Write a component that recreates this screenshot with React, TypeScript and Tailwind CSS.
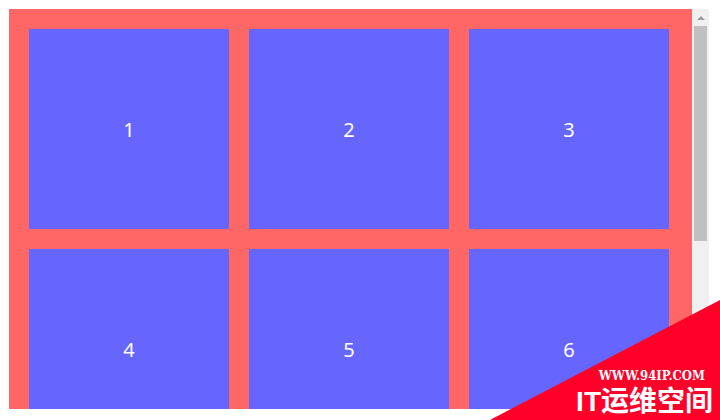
const items = [1, 2, 3, 4, 5, 6];

function ScrollBar() {
  return (
    <div className="flex w-[17px] shrink-0 flex-col bg-[#f0f0f0]" aria-hidden="true">
      <div className="flex h-[17px] items-center justify-center">
        <svg className="h-1 w-2" viewBox="0 0 8 4">
          <path d="M0 4 4 0l4 4z" fill="#9c9c9c" />
        </svg>
      </div>
      <div className="mx-0.5 h-[215px] bg-[#c0c0c0]" />
    </div>
  );
}

function CornerBanner() {
  return (
    <div className="absolute right-0 bottom-0 h-[120px] w-[230px] text-white">
      <svg className="absolute inset-0 h-full w-full" viewBox="0 0 230 120" aria-hidden="true">
        <path d="M230 0v120H0z" fill="#ff0029" />
      </svg>
      <div className="relative flex h-full flex-col items-end justify-end whitespace-nowrap">
        <p className="pr-[15px] font-['DejaVu_Serif_Condensed','DejaVu_Serif',serif] text-[13px] leading-4 font-bold">
          WWW.94IP.COM
        </p>
        <p className="pr-[7px] font-['Liberation_Sans','Noto_Sans_CJK_SC',sans-serif] text-[28px] leading-9 font-bold">
          IT运维空间
        </p>
      </div>
    </div>
  );
}

export default function App() {
  return (
    <main className="relative min-h-screen overflow-hidden bg-white pt-[9px] pr-[11px] pl-[9px]">
      <div className="flex h-[400px]">
        <div className="flex flex-1 flex-wrap content-start gap-5 overflow-hidden bg-[#ff6666] p-5">
          {items.map((n) => (
            <div
              key={n}
              className="flex h-[200px] w-[200px] items-center justify-center bg-[#6666ff] pt-0.5 font-['Noto_Sans',sans-serif] text-[20px] text-white"
            >
              {n}
            </div>
          ))}
        </div>
        <ScrollBar />
      </div>
      <CornerBanner />
    </main>
  );
}
